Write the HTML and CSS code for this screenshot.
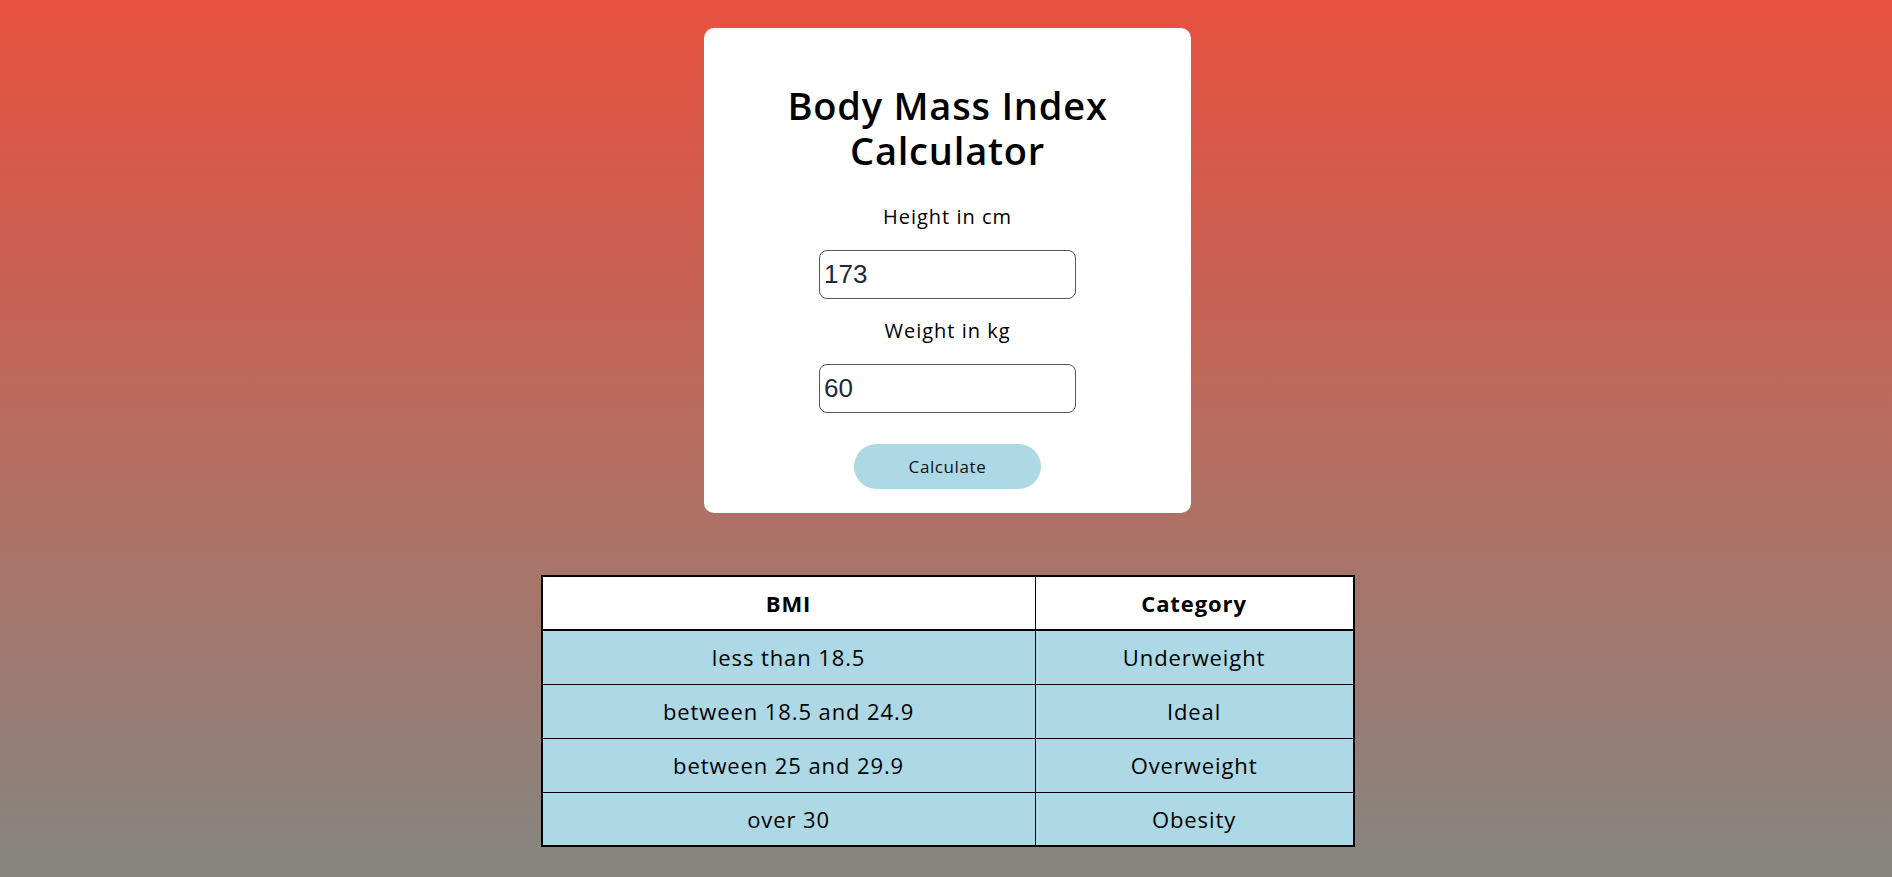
FILE: index.html
```html
<!DOCTYPE html>
<html lang="en">
<head>
<meta charset="utf-8">
<title>BMI Calculator</title>
<link rel="stylesheet" href="styles.css">
</head>
<body>
<main class="page">
  <section class="card">
    <h1 class="title">Body Mass Index<br>Calculator</h1>
    <label class="label" for="height">Height in cm</label>
    <input class="field" id="height" type="text" value="173">
    <label class="label" for="weight">Weight in kg</label>
    <input class="field" id="weight" type="text" value="60">
    <button class="btn" type="button">Calculate</button>
  </section>
  <table class="bmi-table">
    <thead>
      <tr><th class="col-bmi">BMI</th><th class="col-cat">Category</th></tr>
    </thead>
    <tbody>
      <tr><td>less than 18.5</td><td>Underweight</td></tr>
      <tr><td>between 18.5 and 24.9</td><td>Ideal</td></tr>
      <tr><td>between 25 and 29.9</td><td>Overweight</td></tr>
      <tr><td>over 30</td><td>Obesity</td></tr>
    </tbody>
  </table>
</main>
</body>
</html>
```

FILE: styles.css
```css
* { box-sizing: border-box; }
html, body { margin: 0; height: 100%; }
body {
  font-family: "Open Sans", "DejaVu Sans", sans-serif;
  background: linear-gradient(to bottom, #e8513f 0%, #858780 100%);
  color: #000;
}
.page {
  display: flex;
  flex-direction: column;
  align-items: center;
  padding-top: 28px;
  padding-left: 3px;
}
.card {
  width: 487px;
  height: 485px;
  background: #fff;
  border-radius: 10px;
  display: flex;
  flex-direction: column;
  align-items: center;
  padding-top: 55px;
}
.title {
  margin: 0;
  font-size: 38px;
  line-height: 45px;
  font-weight: 600;
  letter-spacing: 0.8px;
  text-align: center;
}
.label {
  font-size: 20px;
  letter-spacing: 1px;
  margin-top: 31px;
  line-height: 26px;
}
.field {
  margin-top: 20px;
  width: 257px;
  height: 49px;
  border: 1px solid #555;
  border-radius: 8px;
  font-family: "Liberation Sans", Arial, sans-serif;
  font-size: 26px;
  color: #1d2a38;
  padding: 0 4px;
}
.field + .label { margin-top: 19px; }
.btn {
  margin-top: 31px;
  width: 187px;
  height: 45px;
  border: none;
  border-radius: 23px;
  background: #add8e6;
  font-family: inherit;
  font-size: 17px;
  letter-spacing: 0.6px;
  color: #111;
}
.bmi-table {
  margin-top: 62px;
  width: 814px;
  border-collapse: collapse;
  border: 2px solid #000;
  font-size: 22px;
  letter-spacing: 0.9px;
}
.bmi-table th, .bmi-table td {
  border: 1px solid #000;
  height: 54px;
  text-align: center;
  padding: 0;
}
.bmi-table th {
  background: #fff;
  font-weight: 700;
  border-bottom: 2px solid #000;
}
.bmi-table td { background: #add8e6; }
.col-bmi { width: 495px; }
.col-cat { width: 319px; }
```
